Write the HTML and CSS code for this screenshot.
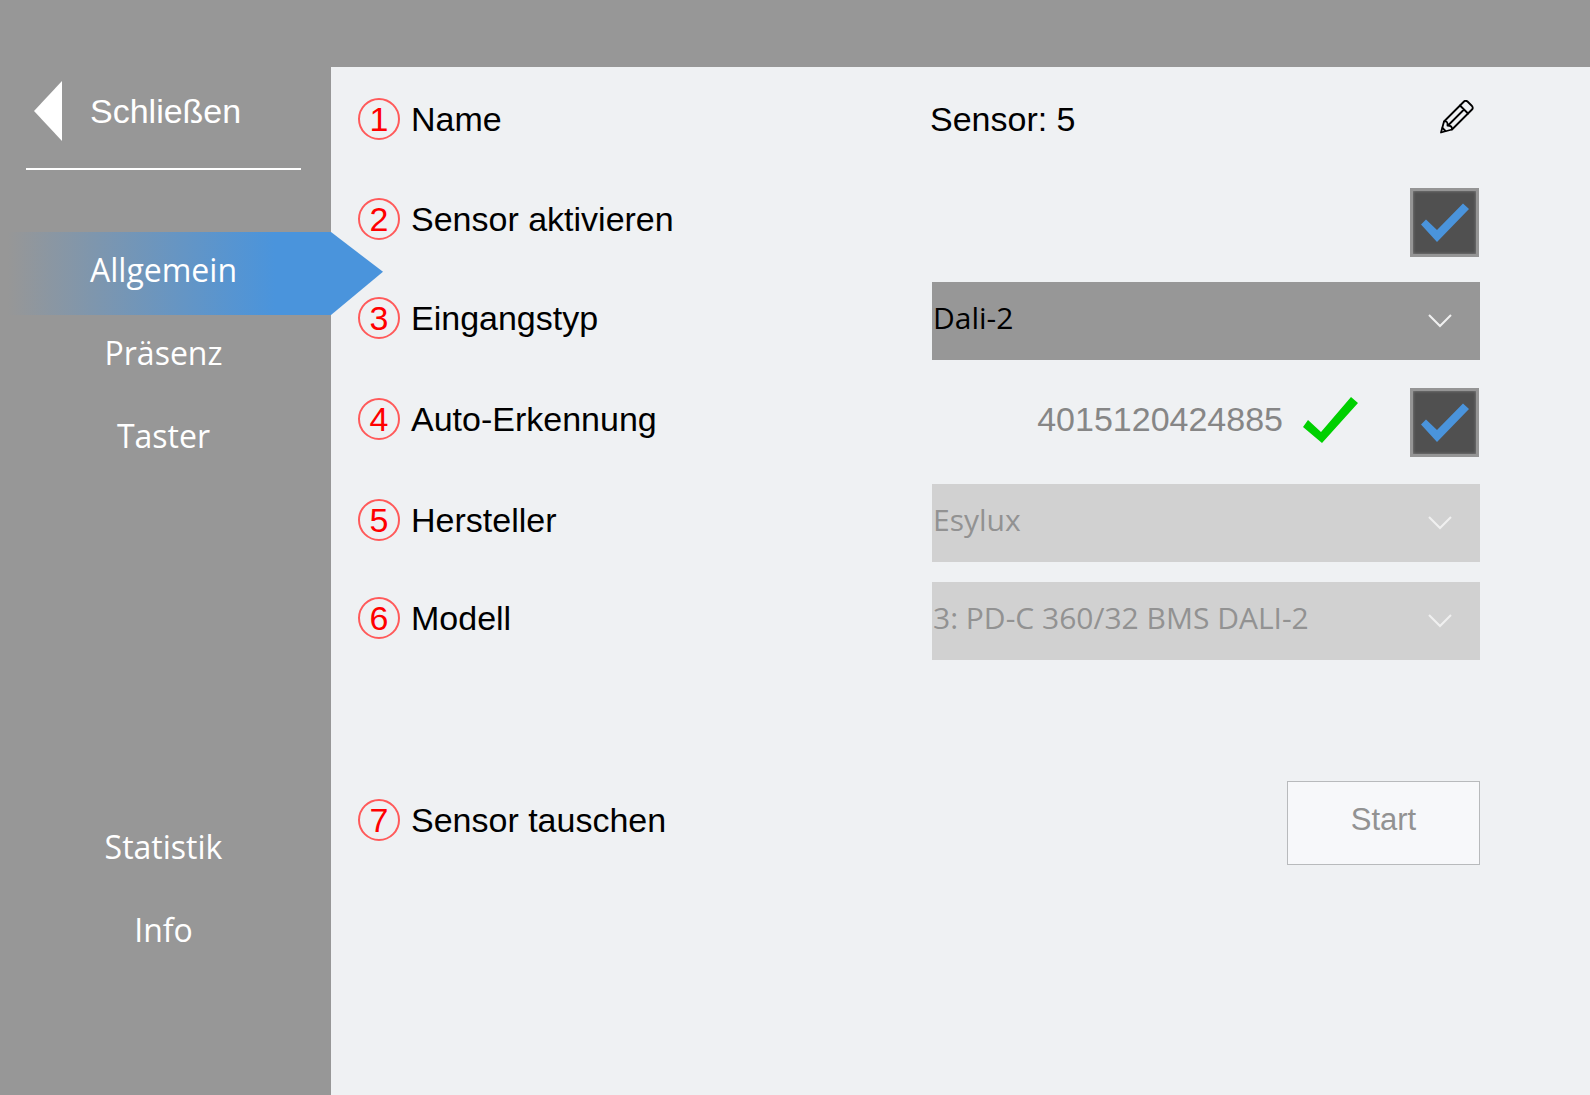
FILE: index.html
```html
<!DOCTYPE html>
<html lang="de">
<head>
  <meta charset="UTF-8" />
  <meta name="viewport" content="width=device-width, initial-scale=1" />
  <title>Sensor: 5 - Allgemein</title>
  <link rel="stylesheet" href="styles.css">
</head>
<body>

<aside class="sidebar">
  <button type="button" class="close">
    <svg width="28" height="60" viewBox="0 0 28 60" aria-hidden="true"><path d="M28 0v60L0 30z" fill="#fff"/></svg>
    Schließen
  </button>
  <nav>
    <a href="#allgemein" class="active">Allgemein</a>
    <a href="#praesenz">Präsenz</a>
    <a href="#taster">Taster</a>
    <div class="nav-bottom">
      <a href="#statistik">Statistik</a>
      <a href="#info">Info</a>
    </div>
  </nav>
</aside>

<main class="panel">
  <form>
    <div class="row">
      <div class="label"><span class="badge">1</span>Name</div>
      <div class="value">
        <span class="text name">Sensor: 5</span>
        <button type="button" class="edit" aria-label="Name bearbeiten">
          <svg width="34" height="34" viewBox="0 0 34 34" fill="none" stroke="#000" stroke-width="1.8" stroke-linejoin="round" stroke-linecap="round">
            <path d="M1 32.5L4 21.500L24 1.500q1.500-1.500 3.500 0L32 6q1.500 2 0 3.500L12 29.500z"/>
            <path d="M20 5.500L28 13.500M23.500 10L9 24.500M4 21.500q4-1 3.500 4q5 0 4.500 4M2.500 28L5.500 31"/>
          </svg>
        </button>
      </div>
    </div>

    <div class="row">
      <label class="label" for="aktiv"><span class="badge">2</span>Sensor aktivieren</label>
      <div class="value">
        <span class="check">
          <input type="checkbox" id="aktiv" checked>
          <svg viewBox="0 0 69 69" aria-hidden="true"><path d="M11 36.500L16 31.500L27 42L53 15.500L59 21L27 54z"/></svg>
        </span>
      </div>
    </div>

    <div class="row row-select">
      <label class="label" for="typ"><span class="badge">3</span>Eingangstyp</label>
      <div class="value">
        <div class="select">
          <select id="typ"><option>Dali-2</option></select>
          <svg viewBox="0 0 24 14" aria-hidden="true"><path d="M1 1l11 11L23 1"/></svg>
        </div>
      </div>
    </div>

    <div class="row row-detect">
      <label class="label" for="auto"><span class="badge">4</span>Auto-Erkennung</label>
      <div class="value">
        <span class="text code">4015120424885</span>
        <svg class="ok" width="55" height="46" viewBox="0 0 55 46" aria-hidden="true"><path d="M0 30L5 23L18 35L48 0L55 6L19 46z" fill="#00d000"/></svg>
        <span class="check">
          <input type="checkbox" id="auto" checked>
          <svg viewBox="0 0 69 69" aria-hidden="true"><path d="M11 36.500L16 31.500L27 42L53 15.500L59 21L27 54z"/></svg>
        </span>
      </div>
    </div>

    <div class="row row-select">
      <label class="label" for="hersteller"><span class="badge">5</span>Hersteller</label>
      <div class="value">
        <div class="select">
          <select id="hersteller" disabled><option>Esylux</option></select>
          <svg viewBox="0 0 24 14" aria-hidden="true"><path d="M1 1l11 11L23 1"/></svg>
        </div>
      </div>
    </div>

    <div class="row row-select">
      <label class="label" for="modell"><span class="badge">6</span>Modell</label>
      <div class="value">
        <div class="select">
          <select id="modell" disabled><option>3: PD-C 360/32 BMS DALI-2</option></select>
          <svg viewBox="0 0 24 14" aria-hidden="true"><path d="M1 1l11 11L23 1"/></svg>
        </div>
      </div>
    </div>

    <div class="row row-swap">
      <label class="label" for="start"><span class="badge">7</span>Sensor tauschen</label>
      <div class="value">
        <button type="button" id="start" class="start" disabled>Start</button>
      </div>
    </div>
  </form>
</main>

</body>
</html>
```

FILE: styles.css
```css
:root {
  --gray: #979797;
  --panel: #eff1f3;
  --blue: #4a94dc;
  --red: #ff0000;
  --arial: "Liberation Sans", Arial, sans-serif;
  --segoe: "Open Sans", "Segoe UI", sans-serif;
}

* {
  box-sizing: border-box;
}

body {
  margin: 0;
  min-height: 100vh;
  display: flex;
  background: var(--gray);
  font-family: var(--arial);
  font-size: 34px;
  color: #000;
}

button {
  font-family: inherit;
  border: 0;
  padding: 0;
  background: none;
}

/* Sidebar */
.sidebar {
  width: 331px;
  flex-shrink: 0;
  padding-top: 81px;
  color: #fff;
}

.close {
  display: flex;
  align-items: center;
  gap: 28px;
  width: 275px;
  margin-left: 26px;
  padding: 0 0 27px 8px;
  border-bottom: 2px solid #fff;
  color: #fff;
  font-size: 34px;
}

nav {
  margin-top: 62px;
  font-family: var(--segoe);
  font-size: 32px;
}

nav a {
  display: flex;
  align-items: center;
  justify-content: center;
  height: 83px;
  padding: 0 4px 8px 0;
  color: #fff;
  text-decoration: none;
}

nav a.active {
  position: relative;
  background: linear-gradient(to right, var(--gray) 8px, var(--blue) 275px);
}

nav a.active::after {
  content: '';
  position: absolute;
  left: 100%;
  top: 0;
  width: 52px;
  height: 100%;
  background: var(--blue);
  clip-path: polygon(0 0, 100% 48%, 0 100%);
}

.nav-bottom {
  margin-top: 328px;
}

/* Settings */
.panel {
  flex: 1;
  margin-top: 67px;
  padding: 5px 110px 0 27px;
  background: var(--panel);
}

.row {
  display: flex;
  align-items: center;
  height: 100px;
}

.row-select {
  height: 98px;
}

.row-detect {
  height: 104px;
}

.row-swap {
  margin-top: 103px;
}

.label {
  flex: 1;
  display: flex;
  align-items: center;
  gap: 11px;
  padding-bottom: 6px;
}

.badge {
  width: 42px;
  height: 42px;
  border: 2px solid #ff5a5a;
  border-radius: 50%;
  color: var(--red);
  text-align: center;
  line-height: 38px;
}

.value {
  width: 548px;
  display: flex;
  align-items: center;
  justify-content: flex-end;
}

.text {
  padding-bottom: 6px;
}

.name {
  flex: 1;
  margin-left: -2px;
}

.edit {
  display: flex;
  margin: 0 6px 10px 0;
}

.code {
  color: #868686;
}

.ok {
  margin: 0 52px 4px 20px;
}

.check {
  position: relative;
  width: 69px;
  height: 69px;
  margin-right: 1px;
}

.check input {
  appearance: none;
  display: block;
  width: 100%;
  height: 100%;
  margin: 0;
  border: 3px solid #959595;
  background: #505050;
  box-shadow: inset 0 0 3px #888;
}

.check svg {
  position: absolute;
  inset: 0;
  fill: var(--blue);
  pointer-events: none;
  display: none;
}

.check input:checked + svg {
  display: block;
}

.select {
  position: relative;
  width: 100%;
}

.select select {
  appearance: none;
  display: block;
  width: 100%;
  height: 78px;
  padding: 0 0 8px 1px;
  border: 0;
  border-radius: 0;
  background: var(--gray);
  color: #000;
  font-family: var(--segoe);
  font-size: 30px;
}

.select select:disabled {
  background: #d1d1d1;
  color: #929292;
  opacity: 1;
}

.select svg {
  position: absolute;
  right: 28px;
  top: 32px;
  width: 24px;
  height: 14px;
  fill: none;
  stroke: #f0f0f0;
  stroke-width: 2;
  pointer-events: none;
}

.start {
  width: 193px;
  height: 84px;
  padding-bottom: 6px;
  border: 1px solid #b8babc;
  background: #f7f8fa;
  color: #929292;
  font-size: 31px;
}
```
